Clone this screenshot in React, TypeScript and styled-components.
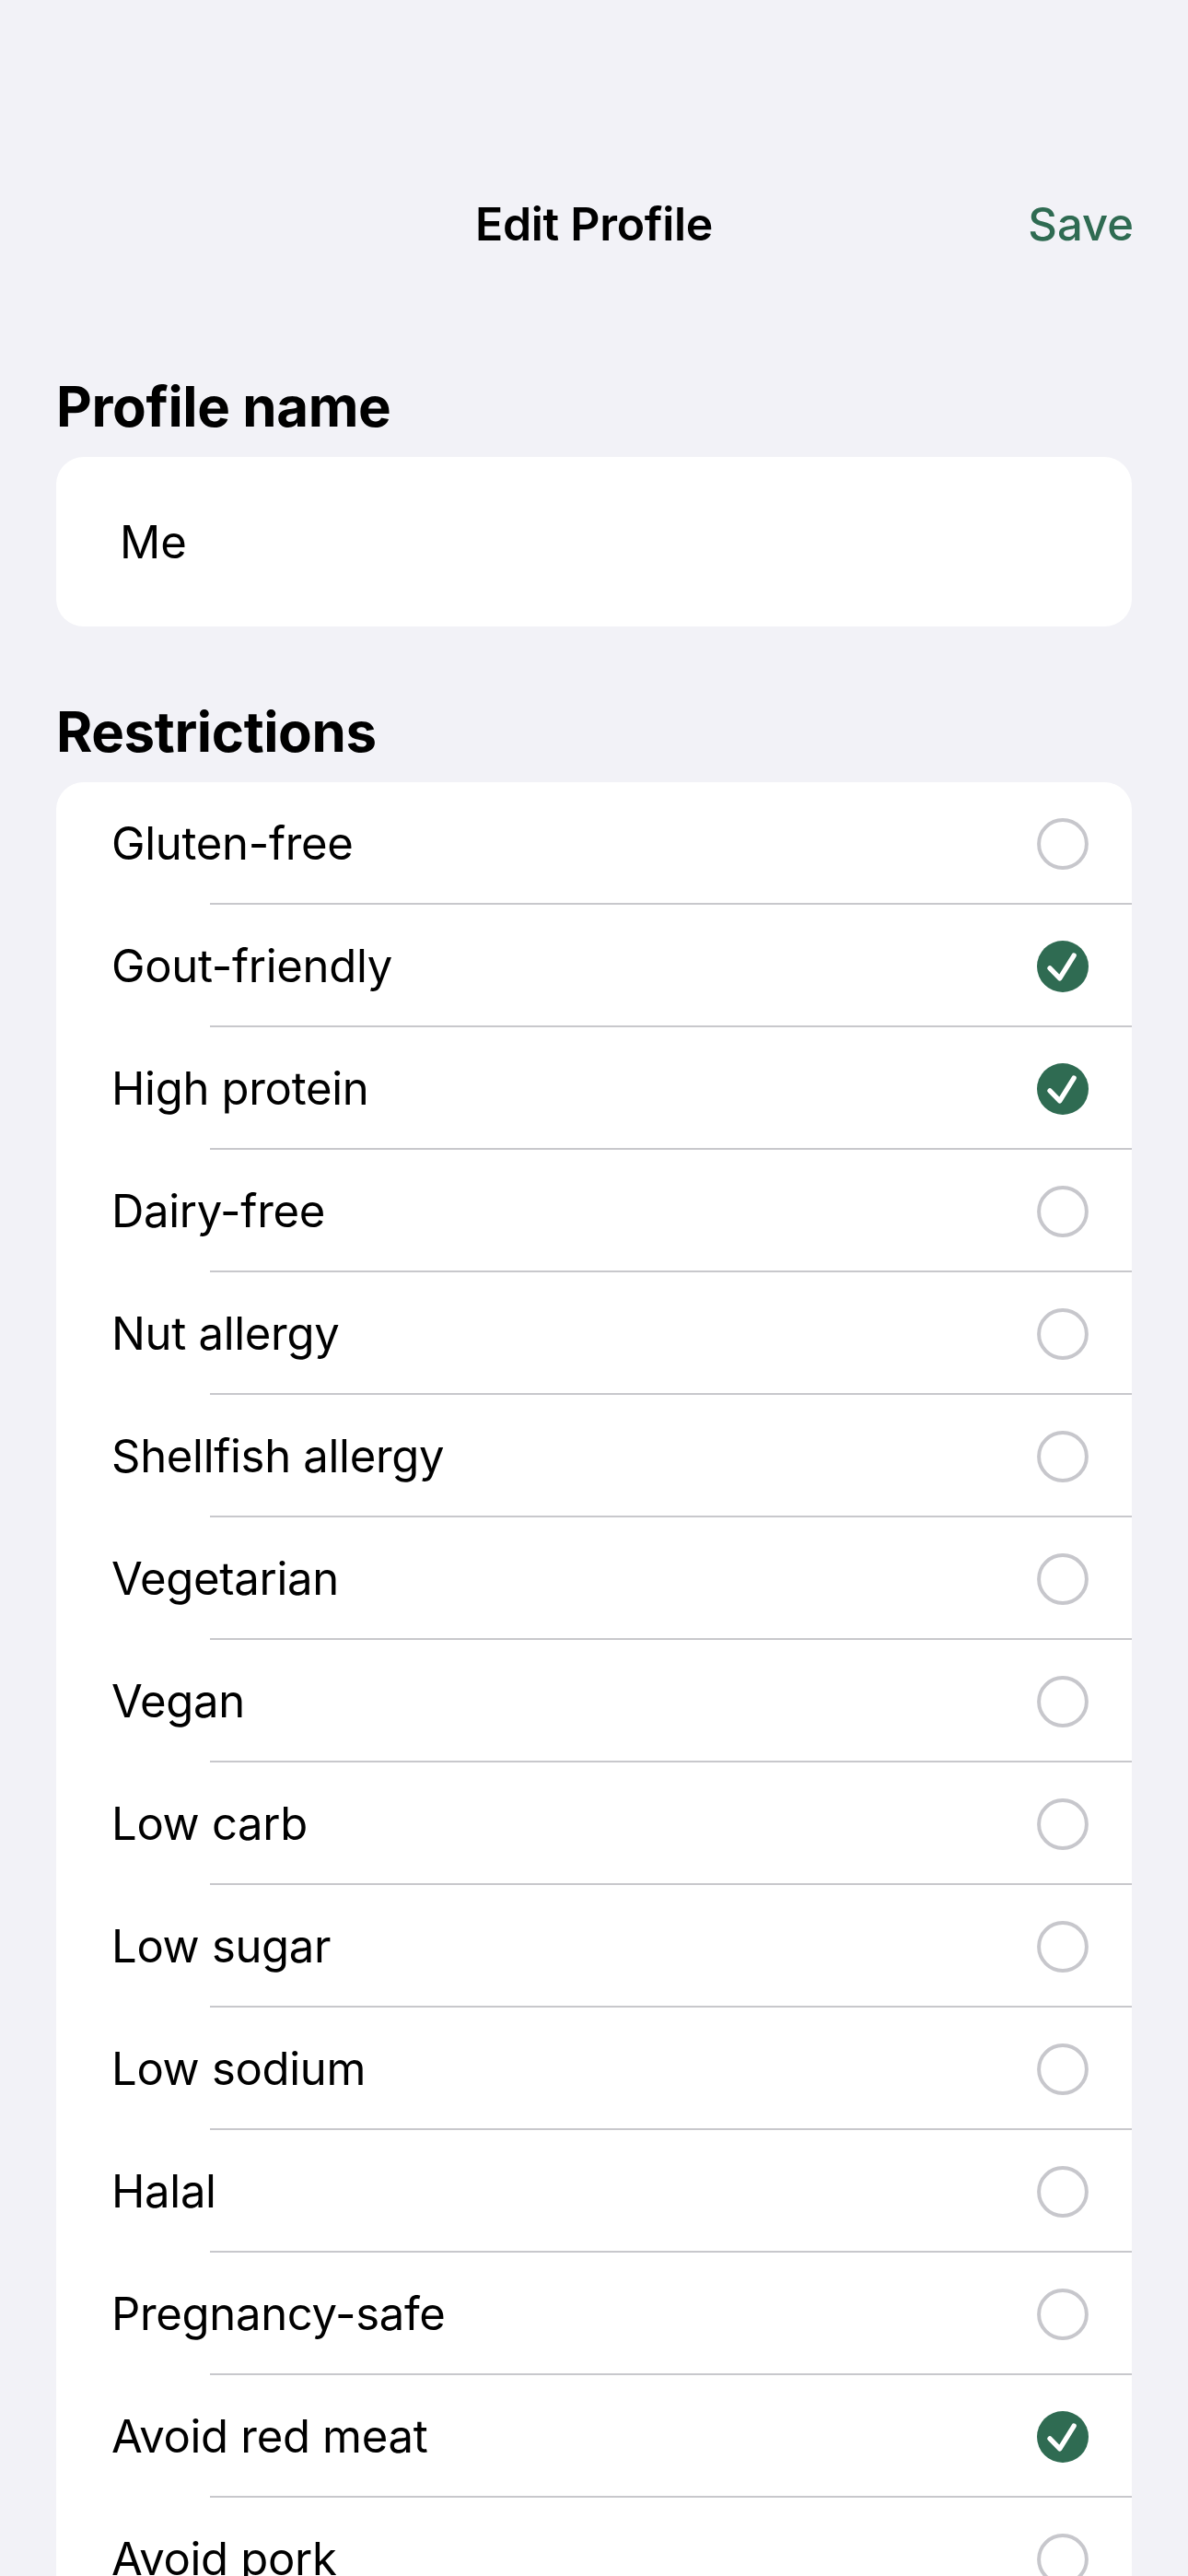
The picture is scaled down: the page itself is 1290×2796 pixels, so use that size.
import React, { useState } from 'react'
import styled, { createGlobalStyle } from 'styled-components'

const GlobalStyle = createGlobalStyle`
  html, body {
    margin: 0;
    padding: 0;
    background: #f2f2f7;
  }
  body {
    font-family: Inter, "Noto Sans", "Liberation Sans", sans-serif;
    color: #000;
    -webkit-font-smoothing: antialiased;
  }
`

const Page = styled.div`
  min-height: 2796px;
  background: #f2f2f7;
  padding: 0 61px;
  box-sizing: border-box;
  overflow: hidden;
`

const NavBar = styled.div`
  display: grid;
  grid-template-columns: 1fr auto 1fr;
  align-items: center;
  height: 90px;
  margin-top: 198px;
`

const NavTitle = styled.div`
  grid-column: 2;
  font-size: 50px;
  font-weight: 600;
  letter-spacing: -0.3px;
`

const SaveButton = styled.button`
  justify-self: end;
  border: none;
  background: transparent;
  padding: 0;
  margin-right: -2px;
  font-family: inherit;
  font-size: 49px;
  font-weight: 500;
  color: #2f6b52;
  cursor: pointer;
`

const SectionTitle = styled.h2`
  margin: 0;
  font-size: 60px;
  font-weight: 700;
  letter-spacing: -0.4px;
  line-height: 70px;
`

const Section = styled.section<{ $top: number }>`
  margin-top: ${(p) => p.$top}px;
  display: flex;
  flex-direction: column;
  gap: 20px;
`

const NameCard = styled.div`
  background: #fff;
  border-radius: 30px;
  height: 184px;
  display: flex;
  align-items: center;
  padding: 0 69px;
`

const NameInput = styled.input`
  border: none;
  outline: none;
  background: transparent;
  font-family: inherit;
  font-size: 49px;
  color: #000;
  width: 100%;
  padding: 0;
`

const ListCard = styled.div`
  background: #fff;
  border-radius: 30px;
  overflow: hidden;
`

const Row = styled.label`
  position: relative;
  display: flex;
  align-items: center;
  justify-content: space-between;
  height: 133px;
  padding: 0 47px 0 60px;
  box-sizing: border-box;
  cursor: pointer;

  &:not(:last-child)::after {
    content: '';
    position: absolute;
    left: 167px;
    right: 0;
    bottom: 0;
    height: 2px;
    background: #c8c8cc;
  }
`

const RowLabel = styled.span`
  font-size: 49px;
  font-weight: 400;
  letter-spacing: -0.3px;
`

const CheckIcon = styled.svg`
  width: 56px;
  height: 56px;
  flex-shrink: 0;
`

const restrictions = [
  'Gluten-free',
  'Gout-friendly',
  'High protein',
  'Dairy-free',
  'Nut allergy',
  'Shellfish allergy',
  'Vegetarian',
  'Vegan',
  'Low carb',
  'Low sugar',
  'Low sodium',
  'Halal',
  'Pregnancy-safe',
  'Avoid red meat',
  'Avoid pork',
  'Kosher',
]

const Check = ({ on }: { on: boolean }) =>
  on ? (
    <CheckIcon viewBox="0 0 24 24">
      <circle cx="12" cy="12" r="12" fill="#2f6b52" />
      <path
        d="M6 12.8l4.6 4.7L17.2 6.9"
        fill="none"
        stroke="#fff"
        strokeWidth="2.3"
        strokeLinecap="round"
        strokeLinejoin="round"
      />
    </CheckIcon>
  ) : (
    <CheckIcon viewBox="0 0 24 24">
      <circle cx="12" cy="12" r="11.1" fill="none" stroke="#c7c7cc" strokeWidth="1.7" />
    </CheckIcon>
  )

const App: React.FC = () => {
  const [name, setName] = useState('Me')
  const [selected, setSelected] = useState<string[]>([
    'Gout-friendly',
    'High protein',
    'Avoid red meat',
  ])

  const toggle = (item: string) => {
    setSelected((prev) =>
      prev.includes(item) ? prev.filter((i) => i !== item) : [...prev, item]
    )
  }

  return (
    <>
      <GlobalStyle />
      <Page>
        <NavBar>
          <NavTitle>Edit Profile</NavTitle>
          <SaveButton>Save</SaveButton>
        </NavBar>

        <Section $top={118}>
          <SectionTitle>Profile name</SectionTitle>
          <NameCard>
            <NameInput value={name} onChange={(e) => setName(e.target.value)} />
          </NameCard>
        </Section>

        <Section $top={79}>
          <SectionTitle>Restrictions</SectionTitle>
          <ListCard>
            {restrictions.map((item) => (
              <Row key={item} onClick={() => toggle(item)}>
                <RowLabel>{item}</RowLabel>
                <Check on={selected.includes(item)} />
              </Row>
            ))}
          </ListCard>
        </Section>
      </Page>
    </>
  )
}

export default App
